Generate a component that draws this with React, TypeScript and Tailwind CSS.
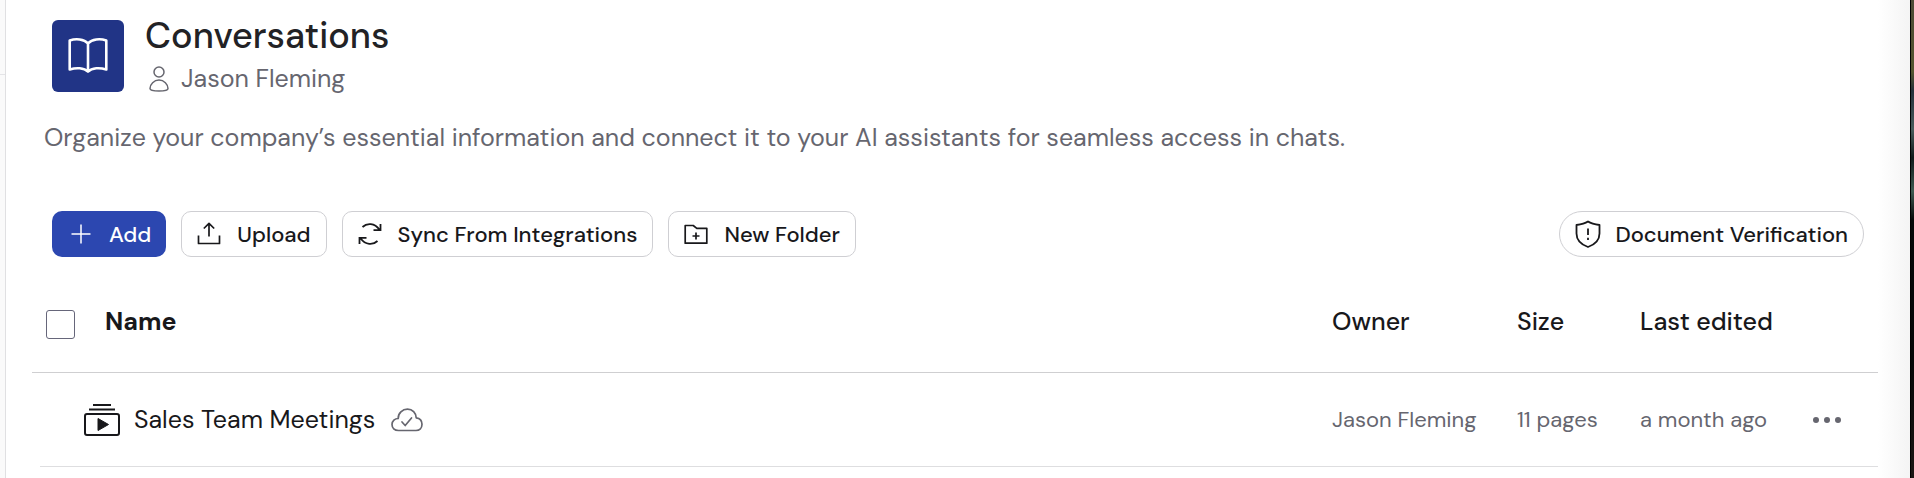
import type { ReactNode } from 'react';

type Document = {
  name: string;
  owner: string;
  size: string;
  edited: string;
};

const documents: Document[] = [
  { name: 'Sales Team Meetings', owner: 'Jason Fleming', size: '11 pages', edited: 'a month ago' },
];

function BookIcon() {
  return (
    <svg width="40" height="40" viewBox="0 0 40 40" fill="none" stroke="currentColor" strokeWidth="2.6" strokeLinejoin="round">
      <path d="M20 7.5C16 3 8 2.4 1.7 4.5V33.5C8 31.5 16 31.5 20 35.5C24 31.5 32 31.5 38.3 33.5V4.5C32 2.4 24 3 20 7.5Z" />
      <path d="M20 7.5V35" />
    </svg>
  );
}

function UserIcon() {
  return (
    <svg width="20" height="26" viewBox="0 0 20 26" fill="none" stroke="currentColor" strokeWidth="1.5">
      <circle cx="10" cy="6" r="5" />
      <path d="M10 14C5 14 1 18.3 1 22.5C1 24 4.5 25 10 25S19 24 19 22.5C19 18.3 15 14 10 14Z" />
    </svg>
  );
}

function PlusIcon() {
  return (
    <svg width="24" height="24" viewBox="0 0 24 24" fill="none" stroke="currentColor" strokeWidth="1.5">
      <path d="M12 2.5V21.5M2.5 12H21.5" />
    </svg>
  );
}

function UploadIcon() {
  return (
    <svg width="24" height="24" viewBox="0 0 24 24" fill="none" stroke="currentColor" strokeWidth="1.7" strokeLinejoin="round">
      <path d="M1.5 13.5V21.5H22.5V13.5" />
      <path d="M12 14.5V1.8M6.8 6.5L12 1.4L17.2 6.5" />
    </svg>
  );
}

function SyncIcon() {
  return (
    <svg width="24" height="24" viewBox="0 0 24 24" fill="none" stroke="currentColor" strokeWidth="1.8">
      <path d="M4.5 5C9 .8 16.5 .8 21.500 7.800M22.500 2V8.200H15.500" />
      <path d="M19.500 19C15 23.200 7.500 23.200 2.500 16.200M1.500 22V15.800H8.500" />
    </svg>
  );
}

function FolderPlusIcon() {
  return (
    <svg width="24" height="24" viewBox="0 0 24 24" fill="none" stroke="currentColor" strokeWidth="1.7" strokeLinejoin="round">
      <path d="M1.2 3.5H9.2L12.8 6.3H22.8V21.2H1.2Z" />
      <path d="M12 10.5V17.5M8.5 14H15.5" />
    </svg>
  );
}

function ShieldIcon() {
  return (
    <svg width="26" height="28" viewBox="0 0 26 28" fill="none" stroke="currentColor" strokeWidth="1.8" strokeLinejoin="round">
      <path d="M13 1.5C10 3.5 5.5 4.5 1.5 5V13.5C1.5 19.5 6 24.5 13 27C20 24.5 24.5 19.5 24.5 13.5V5C20.5 4.5 16 3.5 13 1.5Z" />
      <path d="M13 8.500V15M13 17.800V20" />
    </svg>
  );
}

function MeetingsIcon() {
  return (
    <svg width="36" height="32" viewBox="0 0 36 32" fill="none" stroke="currentColor" strokeWidth="2">
      <path d="M9 1H27M5 5.5H31" />
      <rect x="1" y="10" width="34" height="21" rx="2" />
      <path d="M14 14.5L24.5 20.5L14 26.5Z" fill="currentColor" strokeWidth="1" />
    </svg>
  );
}

function CloudCheckIcon() {
  return (
    <svg width="32" height="24" viewBox="0 0 32 24" fill="none" stroke="currentColor" strokeWidth="1.7" strokeLinecap="round" strokeLinejoin="round">
      <path d="M7.5 22.5C3.5 22.5 1 20 1 16.5S4 10.5 7.2 10.5C7 5 11.5 1.2 16.5 1.2C21.5 1.2 25 5 25.2 9.8C29 10.3 31 13 31 16.3C31 20 28.5 22.5 25 22.5Z" />
      <path d="M11 14L14.2 17.5L20.5 10" />
    </svg>
  );
}

function DotsIcon() {
  return (
    <svg width="28" height="8" viewBox="0 0 28 8" fill="currentColor">
      <circle cx="3" cy="4" r="3" />
      <circle cx="14" cy="4" r="3" />
      <circle cx="25" cy="4" r="3" />
    </svg>
  );
}

function ToolbarButton({ icon, children }: { icon: ReactNode; children: ReactNode }) {
  return (
    <button
      type="button"
      className="flex h-[46px] items-center gap-4 whitespace-nowrap rounded-[10px] border border-[#cfcfd3] px-[15px] text-[22px] font-medium"
    >
      {icon}
      {children}
    </button>
  );
}

export default function App() {
  return (
    <div className="flex min-h-screen bg-white font-['DM_Sans','Inter',sans-serif] text-[#18181b]">
      {/* Edge of the sidebar */}
      <div className="w-[6px] shrink-0 border-r border-[#e0e0e2] bg-[#fafafa]">
        <div className="h-[75px] border-b border-[#e4e4e7]" />
      </div>

      <main className="min-w-0 flex-1 pl-[26px]">
        <header className="flex gap-[21px] pl-5 pt-5">
          <div className="flex size-[72px] shrink-0 items-center justify-center rounded-md bg-[#213486] text-white">
            <BookIcon />
          </div>
          <div className="-mt-2">
            <h1 className="text-4xl font-medium leading-[48px] text-[#222225]">Conversations</h1>
            <p className="flex items-center gap-3 pl-1 text-[25px] leading-[38px] text-[#66666f]">
              <UserIcon />
              Jason Fleming
            </p>
          </div>
        </header>

        <p className="mt-5 pl-[12px] text-[25px] leading-[40px] text-[#66666f]">
          Organize your company’s essential information and connect it to your AI assistants for seamless access in chats.
        </p>

        {/* Toolbar */}
        <div className="mt-[53px] flex items-center justify-between pl-5 pr-[14px]">
          <div className="flex gap-[15px]">
            <button
              type="button"
              className="flex h-[46px] items-center gap-4 rounded-[10px] bg-[#2c47b0] pl-[17px] pr-[15px] text-[22px] font-medium text-white"
            >
              <PlusIcon />
              Add
            </button>
            <ToolbarButton icon={<UploadIcon />}>Upload</ToolbarButton>
            <ToolbarButton icon={<SyncIcon />}>Sync From Integrations</ToolbarButton>
            <ToolbarButton icon={<FolderPlusIcon />}>New Folder</ToolbarButton>
          </div>
          <button
            type="button"
            className="flex h-[46px] items-center gap-[14px] whitespace-nowrap rounded-full border border-[#cfcfd3] px-[15px] text-[22px] font-medium"
          >
            <ShieldIcon />
            Document Verification
          </button>
        </div>

        {/* Documents */}
        <table className="mt-[14px] w-full table-fixed border-separate border-spacing-0 text-left">
          <colgroup>
            <col className="w-2" />
            <col />
            <col className="w-[185px]" />
            <col className="w-[123px]" />
            <col className="w-[166px]" />
            <col className="w-[72px]" />
          </colgroup>
          <thead>
            <tr className="h-[102px] text-[25px] [&>th]:border-b [&>th]:border-[#cfcfd1]">
              <th colSpan={2} className="pl-[14px] font-bold">
                <div className="flex items-end gap-[30px] leading-[34px]">
                  <input
                    type="checkbox"
                    aria-label="Select all"
                    className="size-[29px] appearance-none rounded-[3px] border border-[#66667a] bg-white"
                  />
                  Name
                </div>
              </th>
              <th className="font-medium">Owner</th>
              <th className="font-medium">Size</th>
              <th className="whitespace-nowrap font-medium">Last edited</th>
              <th />
            </tr>
          </thead>
          <tbody>
            {documents.map((doc) => (
              <tr
                key={doc.name}
                className="h-[94px] whitespace-nowrap text-[22px] text-[#66666f] [&>td+td]:border-b [&>td+td]:border-[#dedee0]"
              >
                <td />
                <td className="pl-11">
                  <div className="flex items-center">
                    <span className="text-[#18181b]">
                      <MeetingsIcon />
                    </span>
                    <span className="ml-[14px] mr-4 text-[25px] text-[#18181b]">{doc.name}</span>
                    <CloudCheckIcon />
                  </div>
                </td>
                <td>{doc.owner}</td>
                <td>{doc.size}</td>
                <td>{doc.edited}</td>
                <td>
                  <button type="button" aria-label="More actions" className="flex h-8 items-center pl-[7px]">
                    <DotsIcon />
                  </button>
                </td>
              </tr>
            ))}
          </tbody>
        </table>
      </main>

      {/* Right edge of the window */}
      <div className="w-8 shrink-0 bg-linear-to-r from-white to-[#f4f4f4]" />
      <div className="w-1 shrink-0 border-l border-black bg-[linear-gradient(to_bottom,#4d4a35_0%,#55552f_15%,#25303a_19%,#4a5c5c_27%,#10191a_33%,#3f5a52_40%,#050808_46%,#050606_75%,#1c1614_100%)]" />
    </div>
  );
}
